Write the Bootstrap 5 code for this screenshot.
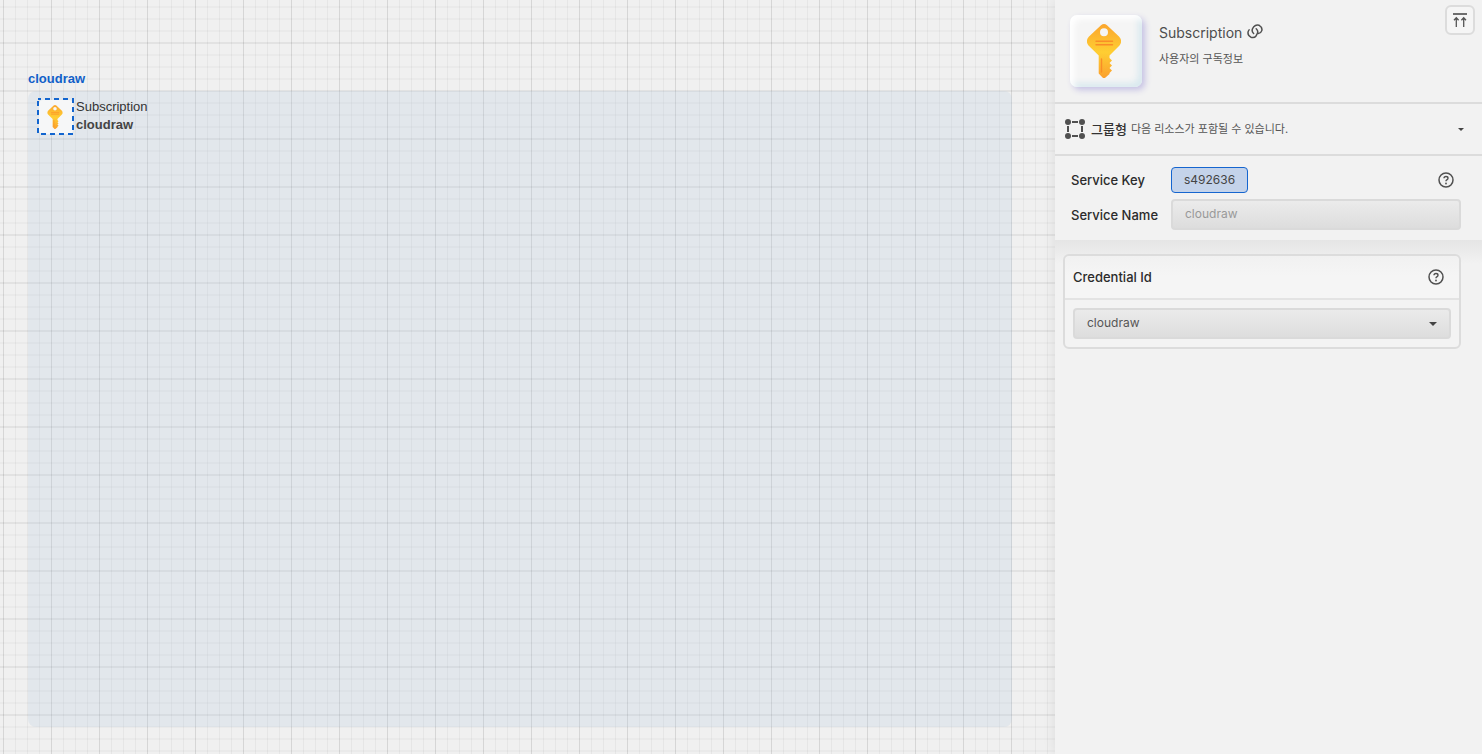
<!DOCTYPE html>
<html lang="ko">
<head>
<meta charset="utf-8">
<meta name="viewport" content="width=device-width, initial-scale=1">
<title>cloudraw</title>
<link href="https://cdn.jsdelivr.net/npm/bootstrap@5.3.0/dist/css/bootstrap.min.css" rel="stylesheet">
<style>
body { font-family: Inter, "Noto Sans CJK KR", sans-serif; font-size: 13px; line-height: 20px; color: #2b2b2b; background: #f2f2f2; }
/* canvas */
.board {
  font-family: "Liberation Sans", sans-serif; font-size: 13px; line-height: 18px;
  padding: 70px 43px 27px 28px;
  background-color: #f0f0f0;
  background-image:
    linear-gradient(90deg, rgba(0,0,0,.07) 1px, transparent 1px),
    linear-gradient(rgba(0,0,0,.035) 2px, transparent 2px),
    linear-gradient(90deg, rgba(0,0,0,.045) 1px, transparent 1px),
    linear-gradient(rgba(0,0,0,.024) 2px, transparent 2px);
  background-size: 48px 48px, 48px 48px, 12px 12px, 12px 12px;
  background-position: 3px 0, 0 42px, 3px 0, 0 6px;
}
.group-title { color: #1160c9; margin-bottom: 3px; }
.group-area { background: rgba(176,202,222,.22); border-radius: 8px; padding: 7px 9px; }
.node-tile { width: 37px; height: 37px; }
.node-tile svg { display: block; }
.node-text { margin-left: 2px; color: #333; }
.node-text strong { color: #444; }
/* side panel */
.side { width: 427px; background: #f2f2f2; box-shadow: 0 0 12px rgba(0,0,0,.09); z-index: 1; }
.side-head { padding: 15px 7px 15px 15px; height: 104px; border-bottom: 2px solid #dcdcdc; }
.key-tile { width: 72px; height: 72px; border-radius: 7px; background: #f5f5f5;
  box-shadow: inset 4px 4px 6px #fff, inset -4px -4px 6px #d9e9ef, 3px 3px 6px #c5c1e4; }
.head-text { margin-left: 17px; padding-top: 8px; color: #4d4d4d; }
.head-title { font-size: 14px; }
.head-title a { margin-left: 5px; margin-top: -3px; }
.desc { font-size: 11px; margin-top: 6px; color: #555; }
.btn-top { width: 30px; height: 30px; border: 2px solid #dcdcdc; border-radius: 6px; background: #f5f5f5; margin-top: -10px; padding: 0; }
.kind { height: 52px; border: 0; border-bottom: 2px solid #dcdcdc; background: transparent; padding: 0 18px 0 10px; color: #333; }
.kind-name { margin-left: 6px; font-weight: 500; }
.kind .note { font-size: 11px; color: #555; margin-left: 4px; }
.fields { padding: 11px 21px 10px 16px; }
.field-row { margin-top: 6px; }
.field-label { width: 100px; font-weight: 500; }
.key-chip { font-size: 12px; line-height: 18px; height: 26px; padding: 3px 12px; border: 1px solid #1565cf; border-radius: 4px; background: #c4d3ea; color: #444; }
.help { width: 16px; height: 16px; padding: 0; border: 0; background: transparent; display: flex; }
.fields .help { margin-right: 7px; }
.box-input { height: 31px; font-size: 12px; line-height: 18px; padding: 3px 12px 5px; border: 2px solid #dadada; border-radius: 4px; color: #555; }
.form-control.box-input:disabled { background: linear-gradient(#ebebeb, #dddddd); color: #999; }
.form-select.box-input { background-color: #e2e2e2; background-image: url("data:image/svg+xml,%3Csvg xmlns='http://www.w3.org/2000/svg' viewBox='0 0 8 4'%3E%3Cpath fill='%23444' d='M0 0h8L4 4z'/%3E%3C/svg%3E"), linear-gradient(#ebebeb, #dddddd); background-size: 8px 4px, 100% 100%; background-position: right 12px center, 0 0; background-repeat: no-repeat; }
.lower { background: linear-gradient(#e5e5e5, rgba(242,242,242,0) 24px); padding: 14px 21px 14px 8px; }
.cred { border: 2px solid #dcdcdc; border-radius: 6px; background: #f3f3f3; }
.cred-head { height: 44px; padding: 0 15px 0 8px; border-bottom: 2px solid #e3e3e3; background: linear-gradient(#f1f1f1, #f5f5f5 20px); border-radius: 5px 5px 0 0; font-weight: 500; }
.cred-body { padding: 8px; }
</style>
</head>
<body>
<svg width="0" height="0" class="position-absolute" aria-hidden="true">
  <defs>
    <linearGradient id="gold" x1="0" y1="0" x2="0" y2="1">
      <stop offset="0" stop-color="#fba62e"/><stop offset=".52" stop-color="#ffce32"/><stop offset="1" stop-color="#fba02e"/>
    </linearGradient>
    <symbol id="key" viewBox="0 0 34 54">
      <path fill="url(#gold)" fill-rule="evenodd" d="M14 1.200Q17-1 20 1.200L32 12.500Q36 17 32.500 21.500L22.500 31.500V34L25 36.500L22.500 39L25 41.500L22.500 44L25 46.500L22.500 49V50L18.500 53.500Q17 54.500 15.500 53.500L11.700 49.500V31.500L1.500 21.500Q-2 17 2 12.500ZM17 4.300A4 4 0 1 0 17 12.300A4 4 0 1 0 17 4.300Z"/>
      <path stroke="#fa8d27" stroke-width="1.400" stroke-linecap="round" d="M9 17.200H25.500M9 20.700H25.500M14.500 35V48"/>
    </symbol>
    <symbol id="question" viewBox="0 0 16 16">
      <circle cx="8" cy="8" r="7" fill="none" stroke="#505050" stroke-width="1.500"/>
      <path d="M6 6.300Q6 4.500 8 4.500T10 6.200Q10 7.200 8.800 7.900Q8 8.400 8 9.300" fill="none" stroke="#505050" stroke-width="1.400"/>
      <circle cx="8" cy="11.500" r=".9" fill="#505050"/>
    </symbol>
  </defs>
</svg>
<div class="d-flex min-vh-100">
  <main class="board flex-grow-1 d-flex flex-column">
    <div class="group-title fw-bold">cloudraw</div>
    <section class="group-area flex-grow-1">
      <div class="d-flex">
        <div class="node-tile">
          <svg width="37" height="37" viewBox="0 0 37 37" aria-hidden="true"><rect x="2" y="2" width="34" height="34" rx="4" fill="#f6f7f8"/><rect x="1" y="1" width="35" height="35" fill="none" stroke="#1265cf" stroke-width="2" stroke-dasharray="5 4" stroke-dashoffset="2"/><use href="#key" x="10" y="7" width="16" height="24"/></svg>
        </div>
        <div class="node-text"><div>Subscription</div><strong class="d-block">cloudraw</strong></div>
      </div>
    </section>
  </main>
  <aside class="side flex-shrink-0">
    <header class="side-head d-flex">
      <div class="key-tile d-flex align-items-center justify-content-center flex-shrink-0"><svg class="me-1" width="34" height="54" aria-hidden="true"><use href="#key"/></svg></div>
      <div class="head-text flex-grow-1">
        <div class="head-title d-flex align-items-center">
          <span>Subscription</span>
          <a href="#" class="d-flex" aria-label="링크"><svg width="16" height="16" viewBox="0 0 16 16" fill="none" stroke="#505050" stroke-width="1.500" stroke-linecap="round"><path d="M6.600 9.500Q4.300 7.500 5.600 4.500L6.800 2.700Q9 .1 12.200 1.300Q15.600 3.300 14.800 6.600Q14 9.200 11.200 9.600"/><path d="M9.200 4.700Q11.600 6.800 10.300 9.500L9.200 11.700Q7.200 14.400 3.900 13.200Q.4 11.300 1.100 7.900Q1.300 6.900 2.100 5.900"/></svg></a>
        </div>
        <div class="desc">사용자의 구독정보</div>
      </div>
      <button type="button" class="btn-top d-flex align-items-center justify-content-center" aria-label="맨 위로"><svg width="14" height="14" viewBox="0 0 14 14" fill="none" stroke="#555"><path d="M0 1H14" stroke-width="1.700"/><path d="M3.300 14V5M1 7.200L3.300 4.700L5.600 7.200M10.700 14V5M8.400 7.200L10.700 4.700L13 7.200" stroke-width="1.300"/></svg></button>
    </header>
    <button type="button" class="kind w-100 d-flex align-items-center text-start" aria-expanded="false">
      <svg width="20" height="20" viewBox="0 0 20 20" fill="#505050" aria-hidden="true"><circle cx="3" cy="3" r="3"/><circle cx="17" cy="3" r="3"/><circle cx="3" cy="17" r="3"/><circle cx="17" cy="17" r="3"/><path d="M7 2h6v2H7zM7 16h6v2H7zM2 7h2v6H2zM16 7h2v6h-2z"/></svg>
      <span class="kind-name">그룹형</span><span class="note">다음 리소스가 포함될 수 있습니다.</span>
      <svg class="ms-auto" width="6" height="3" viewBox="0 0 6 3" aria-hidden="true"><path fill="#444" d="M0 0h6L3 3z"/></svg>
    </button>
    <div class="fields">
      <div class="d-flex align-items-center">
        <span class="field-label">Service Key</span><span class="key-chip">s492636</span>
        <button type="button" class="help ms-auto" aria-label="도움말"><svg width="16" height="16"><use href="#question"/></svg></button>
      </div>
      <div class="field-row d-flex align-items-center">
        <label class="field-label flex-shrink-0" for="svc">Service Name</label>
        <input id="svc" type="text" class="form-control box-input" value="cloudraw" disabled>
      </div>
    </div>
    <div class="lower">
      <div class="cred">
        <div class="cred-head d-flex align-items-center justify-content-between">
          <label for="cred">Credential Id</label>
          <button type="button" class="help" aria-label="도움말"><svg width="16" height="16"><use href="#question"/></svg></button>
        </div>
        <div class="cred-body"><select id="cred" class="form-select box-input"><option>cloudraw</option></select></div>
      </div>
    </div>
  </aside>
</div>
<script src="https://cdn.jsdelivr.net/npm/bootstrap@5.3.0/dist/js/bootstrap.bundle.min.js"></script>
</body>
</html>
